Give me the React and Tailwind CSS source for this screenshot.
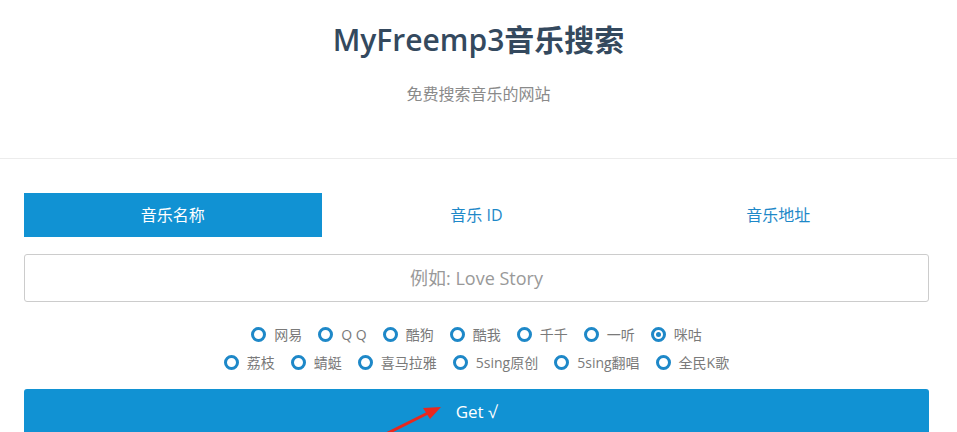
import React, { useState } from 'react';

const font = { fontFamily: '"Open Sans", "Noto Sans CJK SC", sans-serif' };

const tabs = ['音乐名称', '音乐 ID', '音乐地址'];
const row1 = ['网易', 'Q Q', '酷狗', '酷我', '千千', '一听', '咪咕'];
const row2 = ['荔枝', '蜻蜓', '喜马拉雅', '5sing原创', '5sing翻唱', '全民K歌'];

function Radio({ label, checked, onClick }) {
  return (
    <label onClick={onClick} className="flex items-center gap-[8px] cursor-pointer">
      <span className="w-[15px] h-[15px] rounded-full border-[3px] border-[#1e88c8] flex items-center justify-center">
        {checked && <span className="w-[5px] h-[5px] rounded-full bg-[#1e88c8]" />}
      </span>
      <span className="text-[14px] text-[#7a7a7a]">{label}</span>
    </label>
  );
}

export default function App() {
  const [tab, setTab] = useState(0);
  const [source, setSource] = useState('咪咕');

  return (
    <div className="relative w-[957px] h-[432px] overflow-hidden bg-white" style={font}>
      {/* Header */}
      <div className="h-[159px] border-b border-[#ececec] flex flex-col items-center">
        <h1 className="mt-[19px] text-[30px] leading-[42px] font-semibold text-[#34495e]">MyFreemp3音乐搜索</h1>
        <p className="mt-[21px] text-[16px] leading-[24px] text-[#8a8a8a]">免费搜索音乐的网站</p>
      </div>

      <div className="px-[24px] pt-[34px] w-[953px]">
        {/* Tabs */}
        <div className="grid grid-cols-3 h-[44px]">
          {tabs.map((t, i) => (
            <button
              key={t}
              onClick={() => setTab(i)}
              className={'text-[16px] ' + (i === tab ? 'bg-[#1192d3] text-white mr-[4px]' : 'text-[#1e88c8]')}
            >
              {t}
            </button>
          ))}
        </div>

        {/* Input */}
        <input
          className="mt-[17px] w-full h-[48px] border border-[#cccccc] rounded-[3px] text-center text-[18px] text-[#333] placeholder-[#999999] outline-none"
          placeholder="例如: Love Story"
        />

        {/* Sources */}
        <div className="mt-[23px] flex flex-col items-center gap-[9px]">
          <div className="flex items-center gap-[16px] h-[19px]">
            {row1.map(s => <Radio key={s} label={s} checked={source === s} onClick={() => setSource(s)} />)}
          </div>
          <div className="flex items-center gap-[16px] h-[19px]">
            {row2.map(s => <Radio key={s} label={s} checked={source === s} onClick={() => setSource(s)} />)}
          </div>
        </div>

        <button className="mt-[17px] w-full h-[50px] bg-[#1192d3] rounded-t-[3px] text-white text-[17px] pb-[4px]">
          Get √
        </button>
      </div>

      {/* annotation arrow */}
      <svg className="absolute left-0 top-0 pointer-events-none" width="957" height="432">
        <line x1="386" y1="434" x2="428" y2="413" stroke="#e8281e" strokeWidth="3" />
        <polygon points="441,407 423,408 430,419" fill="#e8281e" />
      </svg>
    </div>
  );
}
